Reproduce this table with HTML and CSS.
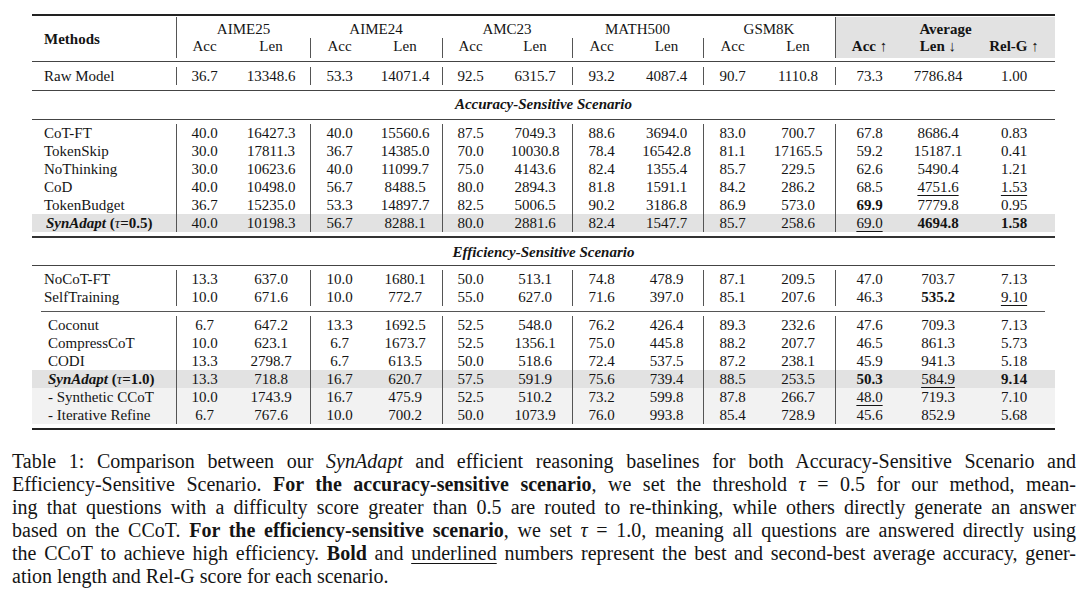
FILE: index.html
```html
<!DOCTYPE html>
<html>
<head>
<meta charset="utf-8">
<link rel="stylesheet" href="styles.css">
</head>
<body>
<div class="page">
  <div class="tbl">
    <div class="head">
      <div class="methods">Methods</div>
      <div class="grp v">AIME25</div>
      <div class="grp">AIME24</div>
      <div class="grp">AMC23</div>
      <div class="grp">MATH500</div>
      <div class="grp">GSM8K</div>
      <div class="avg">
        <div class="avg-t">Average</div>
        <div class="sub">Acc ↑</div>
        <div class="sub">Len ↓</div>
        <div class="sub">Rel-G ↑</div>
      </div>
      <div class="sub v">Acc</div><div class="sub">Len</div>
      <div class="sub v">Acc</div><div class="sub">Len</div>
      <div class="sub v">Acc</div><div class="sub">Len</div>
      <div class="sub v">Acc</div><div class="sub">Len</div>
      <div class="sub v">Acc</div><div class="sub">Len</div>
    </div>

    <div class="blk rule1">
      <div class="row"><div class="m">Raw Model</div><div class="c v">36.7</div><div class="c">13348.6</div><div class="c v">53.3</div><div class="c">14071.4</div><div class="c v">92.5</div><div class="c">6315.7</div><div class="c v">93.2</div><div class="c">4087.4</div><div class="c v">90.7</div><div class="c">1110.8</div><div class="c v">73.3</div><div class="c">7786.84</div><div class="c">1.00</div></div>
    </div>

    <div class="title t1">Accuracy-Sensitive Scenario</div>

    <div class="blk acc">
      <div class="row"><div class="m">CoT-FT</div><div class="c v">40.0</div><div class="c">16427.3</div><div class="c v">40.0</div><div class="c">15560.6</div><div class="c v">87.5</div><div class="c">7049.3</div><div class="c v">88.6</div><div class="c">3694.0</div><div class="c v">83.0</div><div class="c">700.7</div><div class="c v">67.8</div><div class="c">8686.4</div><div class="c">0.83</div></div>
      <div class="row"><div class="m">TokenSkip</div><div class="c v">30.0</div><div class="c">17811.3</div><div class="c v">36.7</div><div class="c">14385.0</div><div class="c v">70.0</div><div class="c">10030.8</div><div class="c v">78.4</div><div class="c">16542.8</div><div class="c v">81.1</div><div class="c">17165.5</div><div class="c v">59.2</div><div class="c">15187.1</div><div class="c">0.41</div></div>
      <div class="row"><div class="m">NoThinking</div><div class="c v">30.0</div><div class="c">10623.6</div><div class="c v">40.0</div><div class="c">11099.7</div><div class="c v">75.0</div><div class="c">4143.6</div><div class="c v">82.4</div><div class="c">1355.4</div><div class="c v">85.7</div><div class="c">229.5</div><div class="c v">62.6</div><div class="c">5490.4</div><div class="c">1.21</div></div>
      <div class="row"><div class="m">CoD</div><div class="c v">40.0</div><div class="c">10498.0</div><div class="c v">56.7</div><div class="c">8488.5</div><div class="c v">80.0</div><div class="c">2894.3</div><div class="c v">81.8</div><div class="c">1591.1</div><div class="c v">84.2</div><div class="c">286.2</div><div class="c v">68.5</div><div class="c"><span class="u">4751.6</span></div><div class="c"><span class="u">1.53</span></div></div>
      <div class="row"><div class="m">TokenBudget</div><div class="c v">36.7</div><div class="c">15235.0</div><div class="c v">53.3</div><div class="c">14897.7</div><div class="c v">82.5</div><div class="c">5006.5</div><div class="c v">90.2</div><div class="c">3186.8</div><div class="c v">86.9</div><div class="c">573.0</div><div class="c v"><b>69.9</b></div><div class="c">7779.8</div><div class="c">0.95</div></div>
      <div class="row ours"><div class="m ours-m"><b><i>SynAdapt</i> (<i class="tau">τ</i>=0.5)</b></div><div class="c v">40.0</div><div class="c">10198.3</div><div class="c v">56.7</div><div class="c">8288.1</div><div class="c v">80.0</div><div class="c">2881.6</div><div class="c v">82.4</div><div class="c">1547.7</div><div class="c v">85.7</div><div class="c">258.6</div><div class="c v"><span class="u">69.0</span></div><div class="c"><b>4694.8</b></div><div class="c"><b>1.58</b></div></div>
    </div>

    <div class="title t2">Efficiency-Sensitive Scenario</div>

    <div class="blk eff1">
      <div class="row"><div class="m">NoCoT-FT</div><div class="c v">13.3</div><div class="c">637.0</div><div class="c v">10.0</div><div class="c">1680.1</div><div class="c v">50.0</div><div class="c">513.1</div><div class="c v">74.8</div><div class="c">478.9</div><div class="c v">87.1</div><div class="c">209.5</div><div class="c v">47.0</div><div class="c">703.7</div><div class="c">7.13</div></div>
      <div class="row"><div class="m">SelfTraining</div><div class="c v">10.0</div><div class="c">671.6</div><div class="c v">10.0</div><div class="c">772.7</div><div class="c v">55.0</div><div class="c">627.0</div><div class="c v">71.6</div><div class="c">397.0</div><div class="c v">85.1</div><div class="c">207.6</div><div class="c v">46.3</div><div class="c"><b>535.2</b></div><div class="c"><span class="u">9.10</span></div></div>
    </div>
    <div class="cmid"></div>

    <div class="blk eff2">
      <div class="row"><div class="m m2">Coconut</div><div class="c v">6.7</div><div class="c">647.2</div><div class="c v">13.3</div><div class="c">1692.5</div><div class="c v">52.5</div><div class="c">548.0</div><div class="c v">76.2</div><div class="c">426.4</div><div class="c v">89.3</div><div class="c">232.6</div><div class="c v">47.6</div><div class="c">709.3</div><div class="c">7.13</div></div>
      <div class="row"><div class="m m2">CompressCoT</div><div class="c v">10.0</div><div class="c">623.1</div><div class="c v">6.7</div><div class="c">1673.7</div><div class="c v">52.5</div><div class="c">1356.1</div><div class="c v">75.0</div><div class="c">445.8</div><div class="c v">88.2</div><div class="c">207.7</div><div class="c v">46.5</div><div class="c">861.3</div><div class="c">5.73</div></div>
      <div class="row"><div class="m m2">CODI</div><div class="c v">13.3</div><div class="c">2798.7</div><div class="c v">6.7</div><div class="c">613.5</div><div class="c v">50.0</div><div class="c">518.6</div><div class="c v">72.4</div><div class="c">537.5</div><div class="c v">87.2</div><div class="c">238.1</div><div class="c v">45.9</div><div class="c">941.3</div><div class="c">5.18</div></div>
      <div class="row ours"><div class="m m2"><b><i>SynAdapt</i> (<i class="tau">τ</i>=1.0)</b></div><div class="c v">13.3</div><div class="c">718.8</div><div class="c v">16.7</div><div class="c">620.7</div><div class="c v">57.5</div><div class="c">591.9</div><div class="c v">75.6</div><div class="c">739.4</div><div class="c v">88.5</div><div class="c">253.5</div><div class="c v"><b>50.3</b></div><div class="c"><span class="u">584.9</span></div><div class="c"><b>9.14</b></div></div>
      <div class="row abl"><div class="m m2">- Synthetic CCoT</div><div class="c v">10.0</div><div class="c">1743.9</div><div class="c v">16.7</div><div class="c">475.9</div><div class="c v">52.5</div><div class="c">510.2</div><div class="c v">73.2</div><div class="c">599.8</div><div class="c v">87.8</div><div class="c">266.7</div><div class="c v"><span class="u">48.0</span></div><div class="c">719.3</div><div class="c">7.10</div></div>
      <div class="row abl"><div class="m m2">- Iterative Refine</div><div class="c v">6.7</div><div class="c">767.6</div><div class="c v">10.0</div><div class="c">700.2</div><div class="c v">50.0</div><div class="c">1073.9</div><div class="c v">76.0</div><div class="c">993.8</div><div class="c v">85.4</div><div class="c">728.9</div><div class="c v">45.6</div><div class="c">852.9</div><div class="c">5.68</div></div>
    </div>
  </div>

  <div class="caption">
    <div class="ln">Table 1: Comparison between our <i>SynAdapt</i> and efficient reasoning baselines for both Accuracy-Sensitive Scenario and</div>
    <div class="ln">Efficiency-Sensitive Scenario. <b>For the accuracy-sensitive scenario</b>, we set the threshold <i>τ</i> = 0.5 for our method, mean-</div>
    <div class="ln">ing that questions with a difficulty score greater than 0.5 are routed to re-thinking, while others directly generate an answer</div>
    <div class="ln">based on the CCoT. <b>For the efficiency-sensitive scenario</b>, we set <i>τ</i> = 1.0, meaning all questions are answered directly using</div>
    <div class="ln">the CCoT to achieve high efficiency. <b>Bold</b> and <span class="u">underlined</span> numbers represent the best and second-best average accuracy, gener-</div>
    <div class="ln last">ation length and Rel-G score for each scenario.</div>
  </div>
</div>
</body>
</html>
```

FILE: styles.css
```css
:root {
  --cols: 144px 56px 78px 58px 74px 56px 74px 58px 73px 58px 74px 68px 70px 82px;
}

html, body {
  margin: 0;
  padding: 0;
  background: #ffffff;
}

body {
  font-family: "Liberation Serif", "Times New Roman", serif;
  color: #141414;
}

.page {
  padding-top: 14px;
}

.tbl {
  margin-left: 32px;
  width: 1023px;
  font-size: 15px;
  line-height: 18px;
  border-top: 2px solid #222;
}

/* header */
.head {
  display: grid;
  grid-template-columns: var(--cols);
  grid-template-rows: 21px 20px;
  padding: 1px 0 3px;
  line-height: 17px;
  border-bottom: 1px solid #444;
}

.methods {
  grid-row: 1 / 3;
  grid-column: 1;
  display: flex;
  align-items: center;
  padding: 3px 0 0 12px;
  font-weight: bold;
}

.grp {
  grid-column: span 2;
  grid-row: 1;
  text-align: center;
  padding-top: 4px;
}

.sub {
  text-align: center;
}

.avg {
  grid-column: 12 / 15;
  grid-row: 1 / 3;
  background: #e2e2e2;
  border-left: 1px solid #555;
  display: grid;
  grid-template-columns: 67px 70px 82px;
  grid-template-rows: 21px 20px;
  font-weight: bold;
}

.avg-t {
  grid-column: 1 / 4;
  text-align: center;
  padding-top: 4px;
}

/* body rows */
.row {
  display: grid;
  grid-template-columns: var(--cols);
  height: 18px;
}

.m {
  padding-left: 12px;
  white-space: nowrap;
}

.m2 {
  padding-left: 16px;
}

.ours-m {
  padding-left: 14px;
}

.c {
  text-align: center;
  white-space: nowrap;
}

.v {
  border-left: 1px solid #555;
}

.ours {
  background: #e2e2e2;
}

.abl {
  background: #f2f2f2;
}

.tau {
  font-weight: normal;
}

.u {
  text-decoration: underline;
  text-underline-offset: 3px;
  text-decoration-thickness: 1px;
}

.blk {
  padding: 4px 0;
}

.rule1 {
  padding: 5px 0;
  border-bottom: 1px solid #444;
}

.title {
  text-align: center;
  font-weight: bold;
  font-style: italic;
}

.t1 {
  padding: 4px 0 6px;
  border-bottom: 1px solid #444;
}

.acc {
  padding: 4px 0;
  border-bottom: 2px solid #333;
}

.t2 {
  padding: 5px 0 4px;
  border-bottom: 1px solid #444;
}

.eff1 {
  padding: 4px 0 5px;
}

.cmid {
  height: 1px;
  background: #555;
  margin: 0 10px 0 9px;
}

.eff2 {
  padding: 4px 0;
  border-bottom: 2px solid #222;
}

/* caption */
.caption {
  margin: 20px 0 0 12px;
  width: 1064px;
  font-size: 20px;
  line-height: 23px;
}

.ln {
  text-align: justify;
  text-align-last: justify;
  white-space: nowrap;
}

.ln.last {
  text-align-last: left;
}
```
